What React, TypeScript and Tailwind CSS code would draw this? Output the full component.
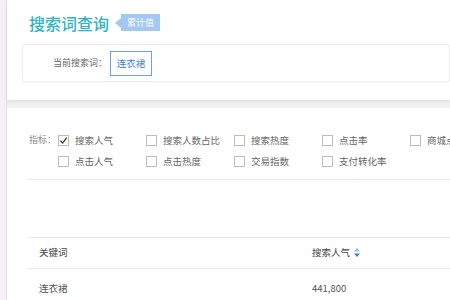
const METRICS = [
  ["搜索人气", "搜索人数占比", "搜索热度", "点击率", "商城点击占比"],
  ["点击人气", "点击热度", "交易指数", "支付转化率"],
];

function Check({ checked, label }: { checked?: boolean; label: string }) {
  return (
    <div className="flex w-[88px] shrink-0 items-center gap-[6px] whitespace-nowrap">
      <span className="flex h-[11px] w-[11px] shrink-0 items-center justify-center border border-[#bdbdbd] bg-white">
        {checked && (
          <svg width="9" height="9" viewBox="0 0 10 10">
            <path d="M1.5 5.2 L4 7.8 L8.6 1.8" fill="none" stroke="#333" strokeWidth="1.4" />
          </svg>
        )}
      </span>
      <span className="text-[9.5px] text-[#666]">{label}</span>
    </div>
  );
}

export default function App() {
  return (
    <div
      className="flex h-[300px] w-[450px] overflow-hidden bg-[#f3f1f3]"
      style={{ fontFamily: '"Noto Sans CJK SC", "Noto Sans", sans-serif' }}
    >
      {/* left rail */}
      <div className="w-[7px] shrink-0 border-r border-[#e4e1e4] bg-[#f4f1f4]" />

      <div className="flex min-w-0 flex-1 flex-col bg-[#f1f1f1]">
        {/* header card */}
        <div className="h-[100px] shrink-0 bg-white pl-[15px] shadow-[0_2px_3px_rgba(0,0,0,0.08)]">
          <div className="flex h-[44px] items-center pl-[7px] pt-[1px]">
            <span className="text-[16px] font-medium leading-none text-[#2eb3c6]">搜索词查询</span>
            <div className="ml-[6px] flex items-center">
              <span className="h-0 w-0 border-y-[5px] border-r-[6px] border-y-transparent border-r-[#a3c9f3]" />
              <span className="flex h-[17px] items-center bg-[#a3c9f3] px-[6px] text-[9px] leading-none text-white">
                累计值
              </span>
            </div>
          </div>
          <div className="flex h-[38px] items-center rounded-[3px] border border-[#ececec] pl-[30px] shadow-[0_1px_2px_rgba(0,0,0,0.04)]">
            <span className="text-[9px] text-[#666]">当前搜索词：</span>
            <span className="ml-[3px] flex h-[25px] w-[42px] items-center justify-center border border-[#6ea2e6] text-[9.5px] text-[#3a7fd6]">
              连衣裙
            </span>
          </div>
        </div>

        <div className="h-[8px] shrink-0" />

        {/* metrics + table */}
        <div className="flex-1 bg-white pl-[20px]">
          <div className="flex pt-[25px]">
            <span className="w-[31px] shrink-0 whitespace-nowrap pl-[2px] pt-[1px] text-[9px] leading-[12px] text-[#888]">
              指标：
            </span>
            <div className="flex flex-col gap-[7px]">
              {METRICS.map((row, i) => (
                <div key={i} className="flex">
                  {row.map((m, j) => (
                    <Check key={m} label={m} checked={i === 0 && j === 0} />
                  ))}
                </div>
              ))}
            </div>
          </div>

          <div className="mt-[10px] border-t border-[#ececec]" />

          <div className="mt-[57px] border-t border-[#ececec]">
            <div className="flex h-[30px] items-center text-[9.5px] text-[#444]">
              <span className="w-[285px] pl-[12px]">关键词</span>
              <span className="flex items-center gap-[4px]">
                搜索人气
                <svg width="6" height="9" viewBox="0 0 6 9">
                  <path d="M3 0 L6 3.5 H0 Z" fill="#9fb8d8" />
                  <path d="M3 9 L6 5.5 H0 Z" fill="#3a7fd6" />
                </svg>
              </span>
            </div>
            <div className="flex h-[40px] items-center border-t border-[#ececec] text-[9.5px] text-[#555]">
              <span className="w-[285px] pl-[12px]">连衣裙</span>
              <span>441,800</span>
            </div>
          </div>
        </div>
      </div>
    </div>
  );
}
